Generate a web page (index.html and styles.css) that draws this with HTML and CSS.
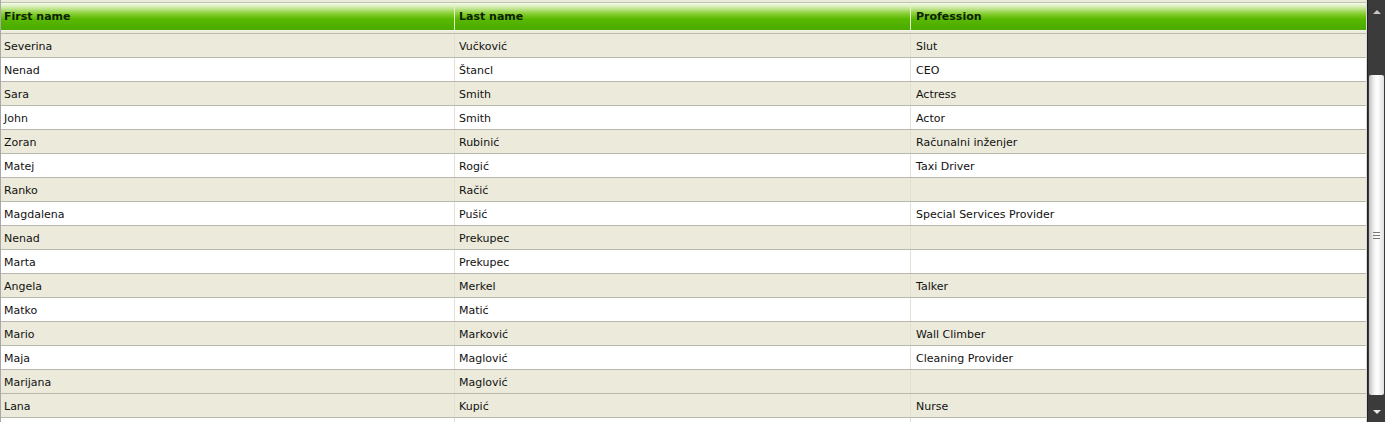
FILE: index.html
```html
<!DOCTYPE html>
<html>
<head>
<meta charset="utf-8">
<link rel="stylesheet" href="styles.css">
</head>
<body>
<div class="grid">
  <div class="table">
    <div class="header">
      <div class="hcell c1">First name</div>
      <div class="hcell c2">Last name</div>
      <div class="hcell c3">Profession</div>
    </div>
    <div class="spacer"></div>
    <div class="rows">
      <div class="row odd"><div class="cell c1">Severina</div><div class="cell c2">Vučković</div><div class="cell c3">Slut</div></div>
      <div class="row"><div class="cell c1">Nenad</div><div class="cell c2">Štancl</div><div class="cell c3">CEO</div></div>
      <div class="row odd"><div class="cell c1">Sara</div><div class="cell c2">Smith</div><div class="cell c3">Actress</div></div>
      <div class="row"><div class="cell c1">John</div><div class="cell c2">Smith</div><div class="cell c3">Actor</div></div>
      <div class="row odd"><div class="cell c1">Zoran</div><div class="cell c2">Rubinić</div><div class="cell c3">Računalni inženjer</div></div>
      <div class="row"><div class="cell c1">Matej</div><div class="cell c2">Rogić</div><div class="cell c3">Taxi Driver</div></div>
      <div class="row odd"><div class="cell c1">Ranko</div><div class="cell c2">Račić</div><div class="cell c3"></div></div>
      <div class="row"><div class="cell c1">Magdalena</div><div class="cell c2">Pušić</div><div class="cell c3">Special Services Provider</div></div>
      <div class="row odd"><div class="cell c1">Nenad</div><div class="cell c2">Prekupec</div><div class="cell c3"></div></div>
      <div class="row"><div class="cell c1">Marta</div><div class="cell c2">Prekupec</div><div class="cell c3"></div></div>
      <div class="row odd"><div class="cell c1">Angela</div><div class="cell c2">Merkel</div><div class="cell c3">Talker</div></div>
      <div class="row"><div class="cell c1">Matko</div><div class="cell c2">Matić</div><div class="cell c3"></div></div>
      <div class="row odd"><div class="cell c1">Mario</div><div class="cell c2">Marković</div><div class="cell c3">Wall Climber</div></div>
      <div class="row"><div class="cell c1">Maja</div><div class="cell c2">Maglović</div><div class="cell c3">Cleaning Provider</div></div>
      <div class="row odd"><div class="cell c1">Marijana</div><div class="cell c2">Maglović</div><div class="cell c3"></div></div>
      <div class="row odd"><div class="cell c1">Lana</div><div class="cell c2">Kupić</div><div class="cell c3">Nurse</div></div>
      <div class="row"><div class="cell c1">&nbsp;</div><div class="cell c2"></div><div class="cell c3"></div></div>
    </div>
  </div>
  <div class="scrollbar">
    <div class="arrow up"></div>
    <div class="track">
      <div class="thumb"><div class="grip"></div></div>
    </div>
    <div class="arrow down"></div>
  </div>
</div>
</body>
</html>
```
FILE: styles.css
```css
html, body {
  margin: 0;
  padding: 0;
  background: #ffffff;
  overflow: hidden;
}
body {
  font-family: "DejaVu Sans", sans-serif;
  font-size: 11px;
  color: #111;
}
.grid {
  display: flex;
  width: 1385px;
  height: 422px;
  overflow: hidden;
}
.table {
  flex: 1;
  border-left: 1px solid #a8a8a8;
  border-right: 1px solid #d8d8d8;
  display: flex;
  flex-direction: column;
  overflow: hidden;
  background: #ecebdb;
}
.header {
  display: flex;
  margin-top: 2px;
  height: 27px;
  flex: none;
  background: linear-gradient(#f6faee 0%, #d6eeb4 14%, #86ce30 40%, #58b800 60%, #4aaa00 100%);
  border-top: 1px solid #b8c8a8;
}
.hcell {
  font-weight: bold;
  color: #0c2200;
  font-size: 11px;
  display: flex;
  align-items: center;
  padding-left: 3px;
  box-sizing: border-box;
  border-right: 1px solid #e4f2d0;
}
.hcell.c2 { padding-left: 4px; }
.hcell.c3 { padding-left: 5px; border-right: none; }
.c1 { width: 454px; flex: none; }
.c2 { width: 456px; flex: none; }
.c3 { flex: 1; }
.spacer {
  height: 4px;
  flex: none;
  background: #ecebdb;
  border-top: 1px solid #f4f4ec;
  border-bottom: 1px solid #bdbcb0;
  box-sizing: border-box;
}
.rows {
  display: flex;
  flex-direction: column;
}
.row {
  display: flex;
  height: 24px;
  flex: none;
  background: #ffffff;
  border-bottom: 1px solid #b9b8ac;
  box-sizing: border-box;
}
.row.odd { background: #ecebdb; }
.cell {
  display: flex;
  align-items: center;
  padding-left: 3px;
  padding-top: 2px;
  box-sizing: border-box;
  border-right: 1px solid #e2e1d6;
  white-space: nowrap;
}
.cell.c3 { border-right: none; padding-left: 5px; }
.cell.c2 { padding-left: 4px; }
.scrollbar {
  width: 18px;
  flex: none;
  background: #3b3b3b;
  border-left: 1px solid #222;
  display: flex;
  flex-direction: column;
  box-sizing: border-box;
}
.arrow {
  height: 24px;
  flex: none;
  position: relative;
}
.arrow.up::after, .arrow.down::after {
  content: "";
  position: absolute;
  left: 5px;
  border-left: 4px solid transparent;
  border-right: 4px solid transparent;
}
.arrow.up::after {
  top: 10px;
  border-bottom: 4px solid #c8c8c8;
}
.arrow.down::after {
  top: 12px;
  border-top: 4px solid #e8e8e8;
}
.track {
  flex: 1;
  padding-top: 51px;
  padding-bottom: 2px;
  display: flex;
  flex-direction: column;
}
.thumb {
  height: 320px;
  margin: 0 1px;
  background: linear-gradient(90deg, #c0c0c0 0%, #f4f4f4 35%, #ffffff 55%, #e0e0e0 100%);
  border-radius: 2px;
  display: flex;
  align-items: center;
  justify-content: center;
}
.grip {
  width: 7px;
  height: 5px;
  border-top: 1px solid #777;
  border-bottom: 1px solid #777;
  position: relative;
}
.grip::after {
  content: "";
  position: absolute;
  left: 0;
  right: 0;
  top: 2px;
  border-top: 1px solid #777;
}
```
